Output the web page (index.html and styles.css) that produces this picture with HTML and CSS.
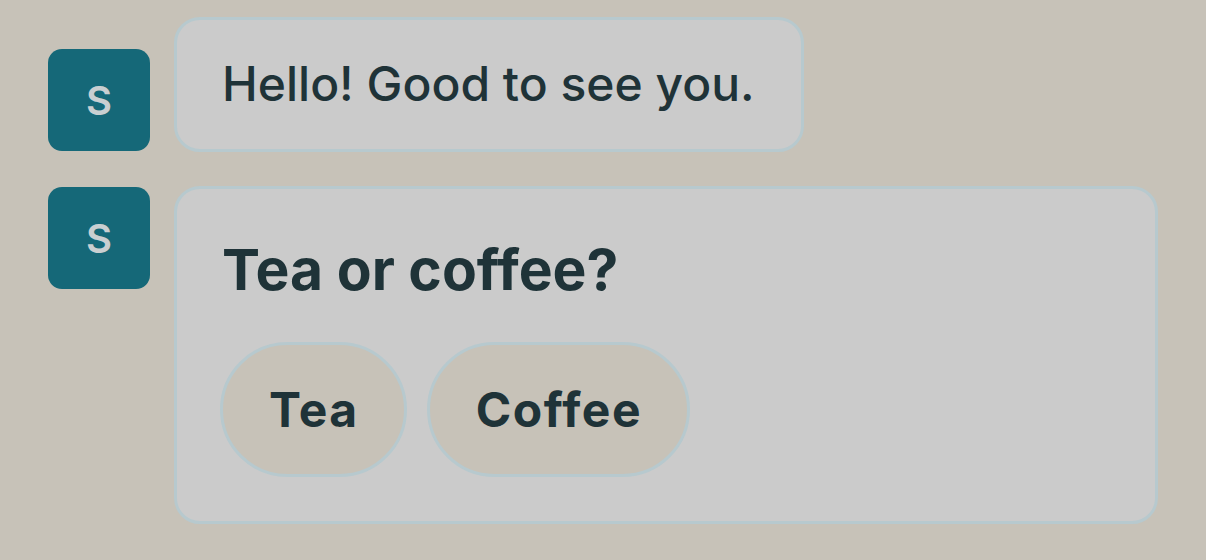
FILE: index.html
```html
<!DOCTYPE html>
<html>
<head>
<meta charset="utf-8">
<link rel="stylesheet" href="styles.css">
</head>
<body>
<div class="chat">
  <div class="row row-first">
    <div class="avatar avatar-low">S</div>
    <div class="bubble bubble-text">Hello! Good to see you.</div>
  </div>
  <div class="row">
    <div class="avatar">S</div>
    <div class="bubble bubble-card">
      <div class="question">Tea or coffee?</div>
      <div class="choices">
        <button class="choice">Tea</button>
        <button class="choice">Coffee</button>
      </div>
    </div>
  </div>
</div>
</body>
</html>
```

FILE: styles.css
```css
html, body {
  margin: 0;
  padding: 0;
  background: #c7c2b8;
  font-family: Inter, "Noto Sans", sans-serif;
  color: #1f3338;
}
.chat {
  padding: 17px 48px 0 48px;
  display: flex;
  flex-direction: column;
  gap: 34px;
}
.row {
  display: flex;
  align-items: flex-start;
  gap: 24px;
}
.avatar {
  flex: none;
  width: 102px;
  height: 102px;
  margin-top: 1px;
  border-radius: 14px;
  background: #156878;
  color: #c9cfd1;
  font-weight: 600;
  font-size: 40px;
  display: flex;
  align-items: center;
  justify-content: center;
}
.avatar-low {
  margin-top: 32px;
}
.bubble {
  background: #cbcbcb;
  border: 3px solid #b7c9ce;
  border-radius: 26px;
  box-sizing: border-box;
}
.bubble-text {
  font-size: 48px;
  font-weight: 500;
  padding: 35px 46px 36px 45px;
  line-height: 58px;
}
.bubble-card {
  width: 984px;
  padding: 46px 45px 44px 45px;
}
.question {
  font-size: 57px;
  font-weight: 700;
  line-height: 69px;
  margin-bottom: 38px;
}
.choices {
  display: flex;
  gap: 20px;
  margin-left: -2px;
}
.choice {
  font-family: inherit;
  font-size: 48px;
  font-weight: 700;
  letter-spacing: 1.5px;
  color: #1f3338;
  background: #c7c2b8;
  border: 3px solid #b7c9ce;
  border-radius: 68px;
  height: 135px;
  padding: 0 45px 0 46px;
}
```
